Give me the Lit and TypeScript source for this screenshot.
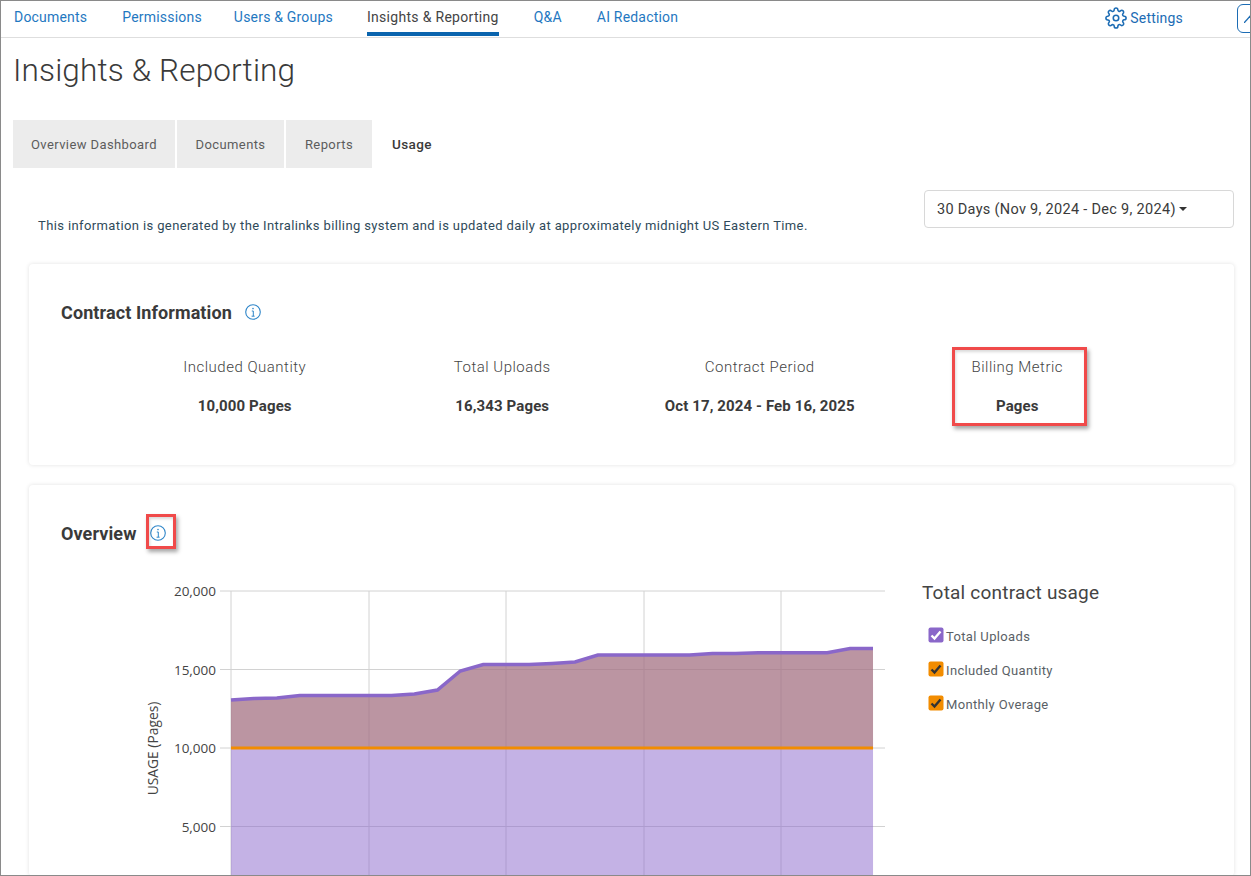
import { LitElement, html, css, svg } from "lit";
import { customElement } from "lit/decorators.js";

const NAV = ["Documents", "Permissions", "Users & Groups", "Insights & Reporting", "Q&A", "AI Redaction"];
const TABS = ["Overview Dashboard", "Documents", "Reports", "Usage"];
const CONTRACT = [
  { label: "Included Quantity", value: "10,000 Pages" },
  { label: "Total Uploads", value: "16,343 Pages" },
  { label: "Contract Period", value: "Oct 17, 2024 - Feb 16, 2025" },
  { label: "Billing Metric", value: "Pages" },
];
const LEGEND = [
  { label: "Total Uploads", fill: "#8a67c9", check: "#fff" },
  { label: "Included Quantity", fill: "#f28c00", check: "#333" },
  { label: "Monthly Overage", fill: "#f28c00", check: "#333" },
];

// chart scale, in page pixels
const X0 = 231;
const STEP = 22.93;
const Y_TOP = 591;
const PER_5K = 78.5;
const Y_10K = Y_TOP + 2 * PER_5K;
const LINE_Y = [
  700, 698.5, 698, 695.5, 695.5, 695.5, 695.5, 695.5, 694, 690, 671, 664.5, 664.5, 664.5, 663.5, 662,
  655, 655, 655, 655, 655, 653.5, 653.5, 652.8, 652.8, 652.8, 652.8, 648.5, 648.5,
];
const points = LINE_Y.map((y, i) => `${(X0 + i * STEP).toFixed(1)},${y}`).join(" ");
const XEND = X0 + (LINE_Y.length - 1) * STEP;

const infoIcon = html`<svg class="info" viewBox="0 0 16 16" width="16" height="16">
  <circle cx="8" cy="8" r="7.3" fill="none" stroke="#2f86c9" stroke-width="1.1"></circle>
  <circle cx="8" cy="4.6" r="0.8" fill="#2f86c9"></circle>
  <path d="M6.8 7h1.5v5M6.6 12.2h3" fill="none" stroke="#2f86c9" stroke-width="1"></path>
</svg>`;

const gearIcon = html`<svg class="gear" viewBox="0 0 24 24" width="22" height="22" fill="none" stroke="#1c6cb4" stroke-width="1.7" stroke-linejoin="round">
  <circle cx="12" cy="12" r="3"></circle>
  <path d="M19.4 15a1.65 1.65 0 0 0 .33 1.82l.06.06a2 2 0 0 1 0 2.83 2 2 0 0 1-2.83 0l-.06-.06a1.65 1.65 0 0 0-1.82-.33 1.65 1.65 0 0 0-1 1.51V21a2 2 0 0 1-2 2 2 2 0 0 1-2-2v-.09A1.65 1.65 0 0 0 9 19.4a1.65 1.65 0 0 0-1.82.33l-.06.06a2 2 0 0 1-2.83 0 2 2 0 0 1 0-2.83l.06-.06a1.65 1.65 0 0 0 .33-1.82 1.65 1.65 0 0 0-1.51-1H3a2 2 0 0 1-2-2 2 2 0 0 1 2-2h.09A1.65 1.65 0 0 0 4.6 9a1.65 1.65 0 0 0-.33-1.82l-.06-.06a2 2 0 0 1 0-2.83 2 2 0 0 1 2.83 0l.06.06a1.65 1.65 0 0 0 1.82.33H9a1.65 1.65 0 0 0 1-1.51V3a2 2 0 0 1 2-2 2 2 0 0 1 2 2v.09a1.65 1.65 0 0 0 1 1.51 1.65 1.65 0 0 0 1.82-.33l.06-.06a2 2 0 0 1 2.83 0 2 2 0 0 1 0 2.83l-.06.06a1.65 1.65 0 0 0-.33 1.82V9a1.65 1.65 0 0 0 1.51 1H21a2 2 0 0 1 2 2 2 2 0 0 1-2 2h-.09a1.65 1.65 0 0 0-1.51 1z"></path>
</svg>`;

@customElement("app-root")
export class AppRoot extends LitElement {
  static styles = css`
    :host {
      display: block;
      height: 876px;
      font-family: Roboto, "Liberation Sans", sans-serif;
      color: #3a3a3a;
    }
    .frame {
      box-sizing: border-box;
      height: 876px;
      border: 1px solid #8a8a8a;
      background: #fff;
      overflow: hidden;
    }
    .nav {
      display: flex;
      height: 36px;
      padding-left: 13px;
      border-bottom: 1px solid #dedede;
      font-size: 14px;
      letter-spacing: 0.2px;
    }
    .nav-item {
      box-sizing: border-box;
      height: 35px;
      margin-right: 35px;
      line-height: 32px;
      color: #1f78c1;
      white-space: nowrap;
    }
    .nav-item:nth-child(2) {
      margin-right: 32px;
    }
    .nav-item:nth-child(3) {
      margin-right: 34px;
    }
    .nav-item.active {
      color: #444;
      letter-spacing: 0.3px;
      border-bottom: 4px solid #0a64ae;
    }
    .settings {
      display: flex;
      align-items: center;
      gap: 3px;
      height: 33px;
      margin-left: auto;
      color: #1c6cb4;
      font-size: 14px;
      white-space: nowrap;
    }
    .launch {
      flex: none;
      box-sizing: border-box;
      width: 30px;
      height: 29px;
      margin: 3px -17px 0 54px;
      padding: 8px 0 0 6px;
      border: 1px solid #1c6cb4;
      border-radius: 6px;
    }
    .launch svg {
      display: block;
    }
    h1 {
      margin: 13px 0 29px;
      padding-left: 12px;
      font-size: 31.5px;
      line-height: 40px;
      font-weight: 300;
      letter-spacing: 0.15px;
      color: #3a3a3a;
    }
    .tabs {
      display: flex;
      gap: 2px;
      height: 48px;
      padding-left: 12px;
    }
    .tab {
      display: flex;
      align-items: center;
      justify-content: center;
      background: #ececec;
      font-size: 13px;
      letter-spacing: 0.4px;
      color: #5c5c5c;
    }
    .tab:nth-child(1) {
      width: 162px;
    }
    .tab:nth-child(2) {
      width: 107px;
    }
    .tab:nth-child(3) {
      width: 86px;
    }
    .tab.active {
      padding-left: 18px;
      background: none;
      font-size: 13.5px;
      font-weight: 500;
      color: #3a3a3a;
    }
    .filter {
      display: flex;
      align-items: flex-end;
      justify-content: space-between;
      margin: 22px 16px 36px 37px;
    }
    .note {
      font-size: 13px;
      line-height: 18px;
      letter-spacing: 0.385px;
      color: #2f4a5a;
      margin-bottom: -7px;
      white-space: nowrap;
    }
    .range {
      box-sizing: border-box;
      display: flex;
      align-items: center;
      gap: 3px;
      flex: none;
      width: 310px;
      height: 38px;
      padding-left: 12px;
      border: 1px solid #d8d8d8;
      border-radius: 4px;
      font-size: 14.5px;
      letter-spacing: 0.3px;
      color: #3a3a3a;
    }
    .caret {
      width: 0;
      height: 0;
      border: 4px solid transparent;
      border-top-color: #333;
      border-bottom: 0;
    }
    .card {
      position: relative;
      margin: 0 16px 20px 28px;
      padding: 38px 32px 0;
      background: #fff;
      border-radius: 4px;
      box-shadow: 0 0 4px rgba(0, 0, 0, 0.12);
    }
    .card.contract {
      box-sizing: border-box;
      height: 201px;
    }
    .heading {
      display: flex;
      align-items: center;
      height: 20px;
      font-size: 18px;
      font-weight: 700;
      letter-spacing: 0.1px;
      color: #3a3a3a;
    }
    .info {
      flex: none;
      margin-left: 13px;
    }
    .facts {
      display: grid;
      grid-template-columns: repeat(4, 257.5px);
      margin: 35px 0 0 55px;
      text-align: center;
    }
    .fact-label {
      font-size: 15px;
      line-height: 20px;
      font-weight: 300;
      letter-spacing: 0.5px;
      color: #444;
    }
    .fact-value {
      margin-top: 19px;
      font-size: 15px;
      line-height: 20px;
      font-weight: 700;
      letter-spacing: 0.12px;
      color: #3a3a3a;
    }
    .mark {
      position: absolute;
      box-sizing: border-box;
      border: 3px solid #f04a4a;
      box-shadow: 2px 3px 4px rgba(0, 0, 0, 0.35), inset 1px 2px 3px rgba(0, 0, 0, 0.15);
    }
    .mark.metric {
      left: 923px;
      top: 83px;
      width: 135px;
      height: 79px;
    }
    .mark.overview {
      left: 117px;
      top: 29px;
      width: 30px;
      height: 35px;
    }
    .chart-row {
      display: flex;
      margin: 32px 0 0 79px;
    }
    .chart {
      flex: none;
      display: block;
    }
    .chart text {
      font-family: "Open Sans", sans-serif;
      font-size: 13.5px;
      fill: #444;
    }
    .chart .axis-title {
      font-size: 13.8px;
    }
    .legend {
      margin-left: 32px;
      padding-top: 8px;
    }
    .legend-title {
      font-size: 19px;
      line-height: 20px;
      letter-spacing: 0.2px;
      color: #444;
      margin-bottom: 16px;
      white-space: nowrap;
    }
    .legend-item {
      display: flex;
      align-items: center;
      gap: 2px;
      height: 34px;
      margin-left: 6px;
      font-size: 13px;
      letter-spacing: 0.35px;
      color: #5a5f66;
      white-space: nowrap;
    }
    .legend-item svg {
      flex: none;
      margin-top: -3px;
    }
  `;

  private renderChart() {
    const rows = [0, 1, 2, 3];
    const cols = [231, 369, 506, 644, 781];
    const labels = ["20,000", "15,000", "10,000", "5,000"];
    return html`<svg class="chart" width="750" height="301" viewBox="140 575 750 301">
      ${rows.map((r) => {
        const y = Y_TOP + r * PER_5K;
        return svg`<line x1="220" x2="885" y1=${y} y2=${y} stroke="#d2d2d2"></line>
          <text x="216" y=${y + 5} text-anchor="end">${labels[r]}</text>`;
      })}
      ${cols.map((x) => svg`<line x1=${x} x2=${x} y1=${Y_TOP} y2="876" stroke="#d2d2d2"></line>`)}
      <polygon points="${points} ${XEND},876 ${X0},876" fill="rgba(137,101,203,0.5)"></polygon>
      <polygon points="${points} ${XEND},${Y_10K} ${X0},${Y_10K}" fill="rgba(178,120,95,0.5)"></polygon>
      <line x1=${X0} x2=${XEND} y1=${Y_10K} y2=${Y_10K} stroke="#f28c00" stroke-width="3"></line>
      <polyline points=${points} fill="none" stroke="#8a67c9" stroke-width="3.5"></polyline>
      <text class="axis-title" transform="translate(158 748.5) rotate(-90)" text-anchor="middle">USAGE (Pages)</text>
    </svg>`;
  }

  render() {
    return html`<div class="frame">
      <nav class="nav">
        ${NAV.map((n) => html`<div class="nav-item ${n === "Insights & Reporting" ? "active" : ""}">${n}</div>`)}
        <div class="settings">${gearIcon}<span>Settings</span></div>
        <div class="launch">
          <svg width="10" height="10" viewBox="0 0 10 10"><path d="M0 10L8 1" fill="none" stroke="#1c6cb4" stroke-width="1.3"></path></svg>
        </div>
      </nav>
      <h1>Insights &amp; Reporting</h1>
      <div class="tabs">
        ${TABS.map((t) => html`<div class="tab ${t === "Usage" ? "active" : ""}">${t}</div>`)}
      </div>
      <div class="filter">
        <div class="note">This information is generated by the Intralinks billing system and is updated daily at approximately midnight US Eastern Time.</div>
        <div class="range"><span>30 Days (Nov 9, 2024 - Dec 9, 2024)</span><span class="caret"></span></div>
      </div>
      <section class="card contract">
        <div class="heading">Contract Information${infoIcon}</div>
        <div class="facts">
          ${CONTRACT.map(
            (c) => html`<div>
              <div class="fact-label">${c.label}</div>
              <div class="fact-value">${c.value}</div>
            </div>`
          )}
        </div>
        <div class="mark metric"></div>
      </section>
      <section class="card">
        <div class="heading">Overview${infoIcon}</div>
        <div class="mark overview"></div>
        <div class="chart-row">
          ${this.renderChart()}
          <div class="legend">
            <div class="legend-title">Total contract usage</div>
            ${LEGEND.map(
              (l) => html`<div class="legend-item">
                <svg width="16" height="16" viewBox="0 0 16 16">
                  <rect x="0.5" y="0.5" width="15" height="15" rx="2" fill=${l.fill}></rect>
                  <path d="M3.5 8.5l3 3 6-7" fill="none" stroke=${l.check} stroke-width="2.4"></path>
                </svg>
                <span>${l.label}</span>
              </div>`
            )}
          </div>
        </div>
      </section>
    </div>`;
  }
}
